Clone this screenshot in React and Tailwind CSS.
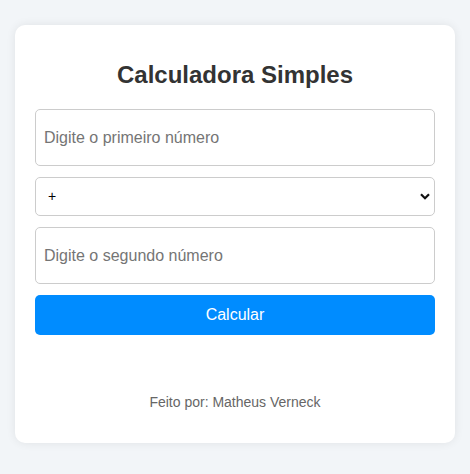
import React from "react";

export default function App() {
  return (
    <div className="min-h-[474px] w-full bg-[#f2f5f8] px-[15px] pt-[25px] pb-[32px]" style={{ fontFamily: '"Liberation Sans", Arial, sans-serif' }}>
      <div className="flex flex-col rounded-[10px] bg-white px-[20px] pt-[36px] pb-[33px] shadow-[0_0_10px_rgba(0,0,0,0.08)]">
        <h2 className="text-center text-[24px] font-bold leading-[28px] text-[#333333]">Calculadora Simples</h2>
        <div className="mt-[20px] flex flex-col gap-[11px]">
          <input
            type="number"
            placeholder="Digite o primeiro número"
            className="h-[57px] w-full rounded-[5px] border border-[#cccccc] px-[8px] text-[16px] text-[#333] outline-none placeholder:text-[#757575]"
          />
          <div className="relative">
            <select className="h-[39px] w-full appearance-none rounded-[5px] border border-[#cccccc] bg-white pl-[12px] text-[14px] text-black outline-none">
              <option>+</option>
              <option>-</option>
              <option>*</option>
              <option>/</option>
            </select>
            <svg className="pointer-events-none absolute right-[5px] top-[16px]" width="10" height="7" viewBox="0 0 10 7">
              <path d="M1 1.2 L5 5.2 L9 1.2" fill="none" stroke="#111" strokeWidth="2.2" />
            </svg>
          </div>
          <input
            type="number"
            placeholder="Digite o segundo número"
            className="h-[57px] w-full rounded-[5px] border border-[#cccccc] px-[8px] text-[16px] text-[#333] outline-none placeholder:text-[#757575]"
          />
          <button className="h-[40px] w-full rounded-[5px] bg-[#008cff] text-[16px] text-white">Calcular</button>
        </div>
        <p className="mt-[59px] text-center text-[14px] leading-[16px] text-[#666666]">Feito por: Matheus Verneck</p>
      </div>
    </div>
  );
}
